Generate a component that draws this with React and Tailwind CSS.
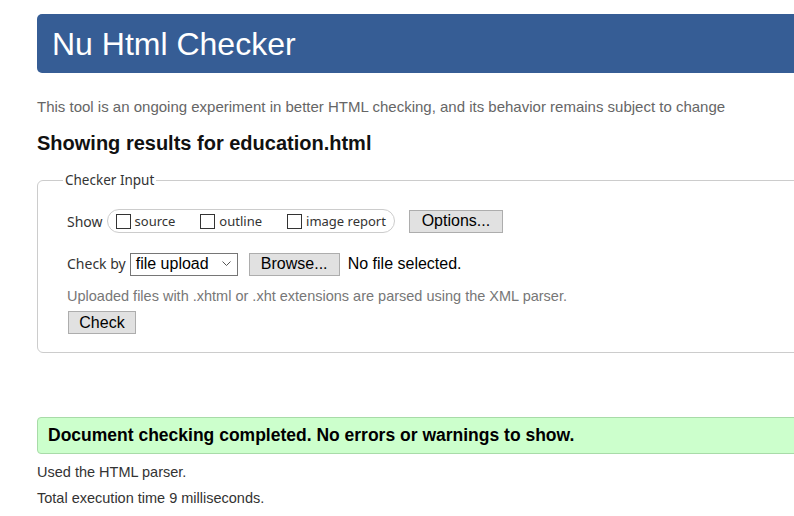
const ui = { fontFamily: '"Noto Sans", "Open Sans", sans-serif' };

const Box = ({ label }) => (
  <label className="flex items-center text-[13px] text-[#333]" style={ui}>
    <span className="mr-[4px] inline-block h-[15px] w-[15px] border border-[#333] bg-white" />
    {label}
  </label>
);

const Btn = ({ children, className = "" }) => (
  <button
    type="button"
    className={`flex h-[23px] items-center justify-center border border-[#adadad] bg-[#e1e1e1] text-[16px] text-black ${className}`}
  >
    {children}
  </button>
);

export default function App() {
  return (
    <div className="h-[516px] w-[794px] overflow-hidden bg-white font-['Liberation_Sans',Arial,sans-serif] text-[#222]">
      <div className="w-[860px] pl-[37px] pt-[14px]">
        <div className="flex h-[59px] items-center rounded-[5px] bg-[#365d95] pl-[15px]">
          <h1 className="text-[32px] leading-[36px] text-white">Nu Html Checker</h1>
        </div>

        <p className="mt-[25px] text-[15px] leading-[18px] text-[#666]">
          This tool is an ongoing experiment in better HTML checking, and its behavior remains subject to change
        </p>

        <h2 className="mt-[16px] text-[20px] font-bold leading-[22px] text-[#111]">
          Showing results for education.html
        </h2>

        <fieldset className="mt-[16px] h-[183px] rounded-[6px] border border-[#ccc] pl-[29px]">
          <legend className="ml-[-4px] px-[2px] text-[13.5px] text-[#333]" style={ui}>
            Checker Input
          </legend>

          <div className="mt-[19px] flex items-center">
            <span className="mr-[4px] text-[14px] text-[#333]" style={ui}>Show</span>
            <div className="flex h-[24px] items-center gap-[25px] rounded-full border border-[#ccc] pl-[8px] pr-[8px]">
              <Box label="source" />
              <Box label="outline" />
              <Box label="image report" />
            </div>
            <Btn className="ml-[14px] w-[94px]">Options...</Btn>
          </div>

          <div className="mt-[19px] flex items-center">
            <span className="mr-[4px] text-[14px] leading-[18px] text-[#333]" style={ui}>Check by</span>
            <div className="flex h-[23px] w-[108px] items-center justify-between border border-[#767676] bg-white pl-[5px] pr-[6px] text-[16px] text-black">
              <span>file upload</span>
              <svg width="9" height="6" viewBox="0 0 9 6" fill="none" stroke="#555" strokeWidth="1">
                <path d="M0.5 0.5 L4.5 4.5 L8.5 0.5" />
              </svg>
            </div>
            <Btn className="ml-[11px] w-[91px]">Browse...</Btn>
            <span className="ml-[8px] text-[16px] text-black">No file selected.</span>
          </div>

          <p className="mt-[12px] text-[14.5px] leading-[17px] text-[#777]">
            Uploaded files with .xhtml or .xht extensions are parsed using the XML parser.
          </p>

          <Btn className="ml-[1px] mt-[6px] w-[68px]">Check</Btn>
        </fieldset>

        <div className="mt-[64px] flex h-[37px] items-center rounded-[4px] border border-[#a8dba8] bg-[#ccffcc] pl-[10px]">
          <p className="text-[17.5px] font-bold text-black">
            Document checking completed. No errors or warnings to show.
          </p>
        </div>

        <p className="mt-[10px] text-[14.5px] leading-[17px] text-[#333]">Used the HTML parser.</p>
        <p className="mt-[9px] text-[14.5px] leading-[17px] text-[#333]">Total execution time 9 milliseconds.</p>
      </div>
    </div>
  );
}
